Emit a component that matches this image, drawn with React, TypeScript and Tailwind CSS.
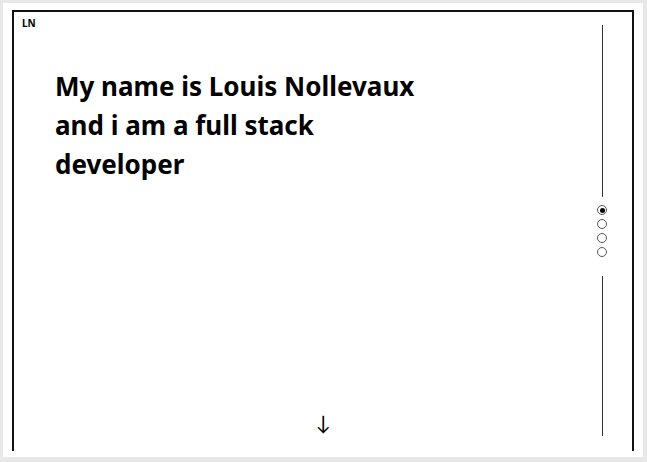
const DOTS = [true, false, false, false];

export default function App() {
  return (
    <div className="w-[647px] h-[462px] bg-[#e8e8e8] pl-[3px] pt-[3px] font-['Noto_Sans',sans-serif] text-black">
      <div className="w-[640px] h-[454px] bg-white pl-[9px] pt-[7px]">
        <div className="flex h-[441px] w-[622px] border-x-2 border-t-2 border-[#111]">
          <main className="flex flex-1 flex-col pl-[8px] pt-[6px]">
            <span className="text-[10px] font-bold leading-none">LN</span>
            <h1 className="mt-[39px] ml-[33px] w-[370px] text-[26px] font-bold leading-[39px]">
              My name is Louis Nollevaux and i am a full stack developer
            </h1>
            <div className="mt-auto mb-[19px] flex justify-center pl-[32px] font-['Lato',sans-serif] text-[20px] leading-none">
              ↓
            </div>
          </main>

          <nav className="mr-[20px] flex w-[20px] flex-col items-center pt-[13px] pb-[15px]">
            <div className="h-[172px] w-px bg-[#333]" />
            <div className="mt-[8px] flex flex-col gap-[4px]">
              {DOTS.map((active, i) => (
                <span
                  key={i}
                  className="flex h-[10px] w-[10px] items-center justify-center rounded-full border border-[#555]"
                >
                  {active && <span className="h-[5px] w-[5px] rounded-full bg-black" />}
                </span>
              ))}
            </div>
            <div className="mt-[19px] w-px flex-1 bg-[#333]" />
          </nav>
        </div>
      </div>
    </div>
  );
}
